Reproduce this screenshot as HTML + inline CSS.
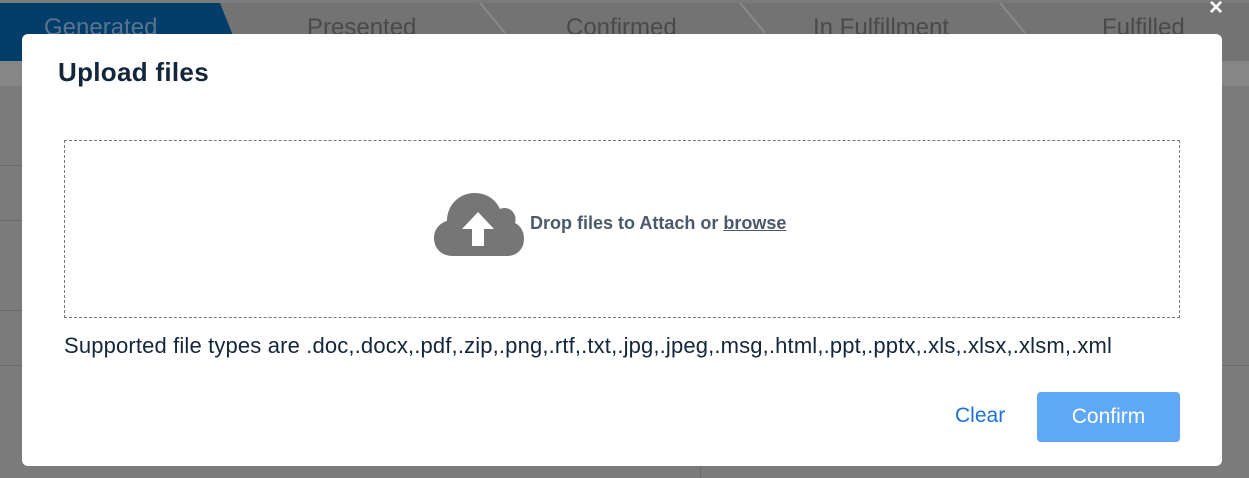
<!DOCTYPE html>
<html><head><style>
body{margin:0;width:1249px;height:478px;overflow:hidden;background:#7b7b7b;font-family:"Liberation Sans",sans-serif;position:relative}
.top{position:absolute;left:0;top:3px;width:1249px;height:58px;background:#737373}
.strip{position:absolute;left:0;top:61px;width:1249px;height:25px;background:#868686}
.tab{position:absolute;top:14px;font-size:24px;color:#4a4a4a}
.hl{position:absolute;left:0;width:22px;height:1px;background:#6a6a6a}
.modal{position:absolute;left:22px;top:34px;width:1200px;height:432px;background:#fff;border-radius:6px}
h1{position:absolute;left:36px;top:23px;margin:0;font-size:26px;font-weight:bold;color:#13263a;letter-spacing:0.3px}
.drop{position:absolute;left:42px;top:106px;width:1114px;height:176px;border:1px dashed #777}
.dt{position:absolute;left:465px;top:72px;font-size:18px;font-weight:bold;color:#4a5a6a;letter-spacing:0}
.sup{position:absolute;left:42px;top:299px;font-size:22px;color:#13263a;letter-spacing:0.15px;white-space:nowrap}
.clear{position:absolute;left:933px;top:370px;font-size:21px;color:#1a73d9}
.btn{position:absolute;left:1015px;top:358px;width:143px;height:50px;background:#5ea8f5;border-radius:4px;color:#fff;font-size:21px;text-align:center;line-height:50px}
</style></head><body>
<div class="top"></div>
<svg style="position:absolute;left:0;top:3px" width="1249" height="58">
<polygon points="0,0 220,0 243,58 0,58" fill="#033d6a"/>
<g stroke="#8a8a8a" stroke-width="2" fill="none">
<polyline points="480,0 505,30"/><polyline points="740,0 765,30"/><polyline points="1000,0 1025,30"/>
</g></svg>
<div class="tab" style="left:44px;color:#5a7390">Generated</div>
<div class="tab" style="left:307px">Presented</div>
<div class="tab" style="left:566px">Confirmed</div>
<div class="tab" style="left:813px">In Fulfillment</div>
<div class="tab" style="left:1102px">Fulfilled</div>
<div class="strip"></div>
<div class="hl" style="top:165px"></div><div class="hl" style="top:220px"></div><div class="hl" style="top:310px"></div><div class="hl" style="top:365px"></div>
<div style="position:absolute;left:1222px;top:365px;width:27px;height:1px;background:#6a6a6a"></div>
<div style="position:absolute;left:700px;top:466px;width:1px;height:12px;background:#6a6a6a"></div>
<div style="position:absolute;right:26px;top:-6px;color:#fff;font-size:24px;font-weight:bold">×</div>
<div class="modal">
<h1>Upload files</h1>
<div class="drop">
<svg style="position:absolute;left:368px;top:50px" width="92" height="66" viewBox="0 0 92 66">
<path d="M20 65 C8 65 1 57 1 47 C1 38 7 32 14 30 C14 14 26 2 42 2 C54 2 63 9 67 18 C71 16 76 17 79 20 C83 24 83 29 82 32 C88 35 91 41 91 48 C91 58 84 65 74 65 Z" fill="#767676"/>
<path d="M45 21 L29 38 L39 38 L39 55 L51 55 L51 38 L61 38 Z" fill="#fff"/>
</svg>
<div class="dt">Drop files to Attach or <u>browse</u></div>
</div>
<div class="sup">Supported file types are .doc,.docx,.pdf,.zip,.png,.rtf,.txt,.jpg,.jpeg,.msg,.html,.ppt,.pptx,.xls,.xlsx,.xlsm,.xml</div>
<div class="clear">Clear</div>
<div class="btn">Confirm</div>
</div>
</body></html>
